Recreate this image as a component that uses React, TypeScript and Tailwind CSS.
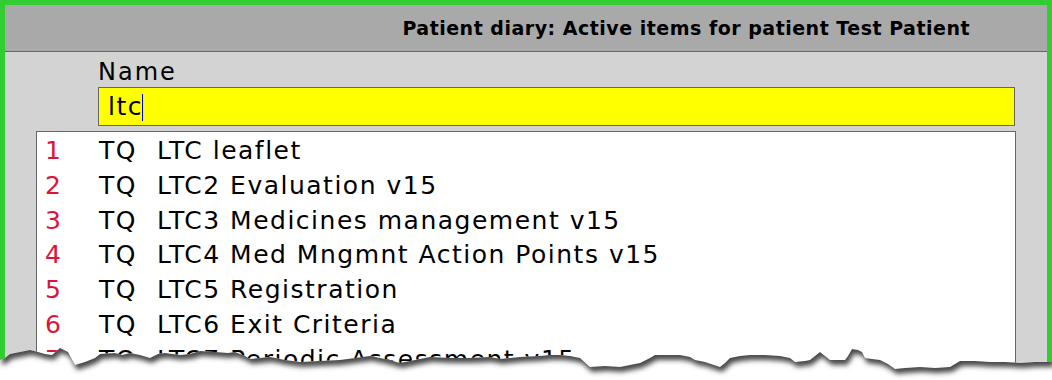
import React from "react";

const rows = [
  "LTC leaflet",
  "LTC2 Evaluation v15",
  "LTC3 Medicines management v15",
  "LTC4 Med Mngmnt Action Points v15",
  "LTC5 Registration",
  "LTC6 Exit Criteria",
  "LTC7 Periodic Assessment v15",
  "LTC8 Review v15",
];

const edge: [number, number][] = [
  [0, 360], [5, 358], [10, 354], [20, 352], [30, 350], [38, 352], [45, 354], [52, 355], [60, 348], [68, 352],
  [75, 365], [85, 362], [95, 358], [100, 354], [115, 353], [122, 355], [130, 353], [140, 355], [150, 358],
  [158, 354], [165, 353], [180, 355], [190, 354], [200, 351], [215, 352], [228, 353], [235, 352], [245, 356],
  [250, 359], [260, 358], [270, 357], [285, 360], [300, 362], [320, 361], [340, 360], [355, 358], [370, 356],
  [385, 359], [400, 363], [415, 360], [430, 357], [450, 358], [470, 358], [490, 357], [500, 359], [520, 357],
  [540, 356], [550, 355], [560, 355], [570, 356], [580, 358], [590, 367], [605, 366], [620, 367], [630, 365],
  [640, 363], [650, 358], [655, 355], [670, 355], [680, 355], [690, 357], [695, 360], [705, 362], [720, 367],
  [725, 363], [730, 358], [740, 356], [750, 355], [765, 355], [780, 356], [790, 358], [795, 362], [805, 361],
  [810, 360], [815, 356], [820, 352], [825, 356], [830, 360], [845, 360], [848, 356], [852, 349], [858, 350],
  [862, 352], [865, 358], [872, 359], [880, 360], [888, 364], [895, 369], [905, 368], [920, 367], [935, 368],
  [950, 367], [955, 364], [960, 361], [975, 361], [990, 362], [1005, 362], [1020, 363], [1035, 362], [1052, 362],
];

function TornEdge() {
  const pts = edge.map(([x, y]) => `${x},${y}`).join(" ");
  const below = `0,380 ${pts} 1052,380`;
  const above = `0,320 ${pts} 1052,320`;
  return (
    <svg
      className="absolute left-0 top-[320px]"
      width={1052}
      height={60}
      viewBox="0 320 1052 60"
    >
      <defs>
        <clipPath id="belowClip">
          <polygon points={below} />
        </clipPath>
        <filter id="blurShadow" x="-5%" y="-50%" width="110%" height="200%">
          <feGaussianBlur stdDeviation="2.6" />
        </filter>
      </defs>
      <polygon points={below} fill="#ffffff" />
      <g clipPath="url(#belowClip)">
        <polygon points={above} fill="#4a4a4a" filter="url(#blurShadow)" transform="translate(2,5)" />
      </g>
    </svg>
  );
}

export default function App() {
  const font = { fontFamily: '"DejaVu Sans", Verdana, sans-serif' };
  return (
    <div className="relative w-[1052px] h-[380px] overflow-hidden bg-white" style={font}>
      <div className="flex h-[380px] flex-col border-[5px] border-[#32cd32] bg-[#d3d3d3]">
        <div className="flex h-[47px] shrink-0 items-center justify-end border-b border-[#666666] bg-[#a9a9a9] pr-[77px] pt-[1px]">
          <span className="text-[19px] font-bold tracking-[0.5px] text-black">
            Patient diary: Active items for patient Test Patient
          </span>
        </div>
        <div className="flex flex-1 flex-col pl-[31px] pr-[31px] pt-[5px]">
          <div className="ml-[62px] text-[24px] leading-[30px] tracking-[2px] text-black">Name</div>
          <div className="ml-[62px] mr-[1px] flex h-[39px] items-center border border-[#666666] bg-[#ffff00] pl-[9px] pt-[1px] text-[25px] tracking-[1.5px] text-black">
            <span>ltc</span>
            <span className="ml-[-1px] h-[27px] w-[1px] bg-[#0000ff]" />
          </div>
          <div className="mt-[5px] flex-1 border border-[#666666] bg-white pl-[8px] pt-[2px]">
            {rows.map((r, i) => (
              <div
                key={i}
                className="grid grid-cols-[54px_58px_1fr] text-[25px] leading-[34.8px] tracking-[1.5px] whitespace-nowrap"
              >
                <span className="text-[#dc143c]">{i + 1}</span>
                <span className="text-black">TQ</span>
                <span className="text-black">{r}</span>
              </div>
            ))}
          </div>
        </div>
      </div>
      <TornEdge />
    </div>
  );
}
